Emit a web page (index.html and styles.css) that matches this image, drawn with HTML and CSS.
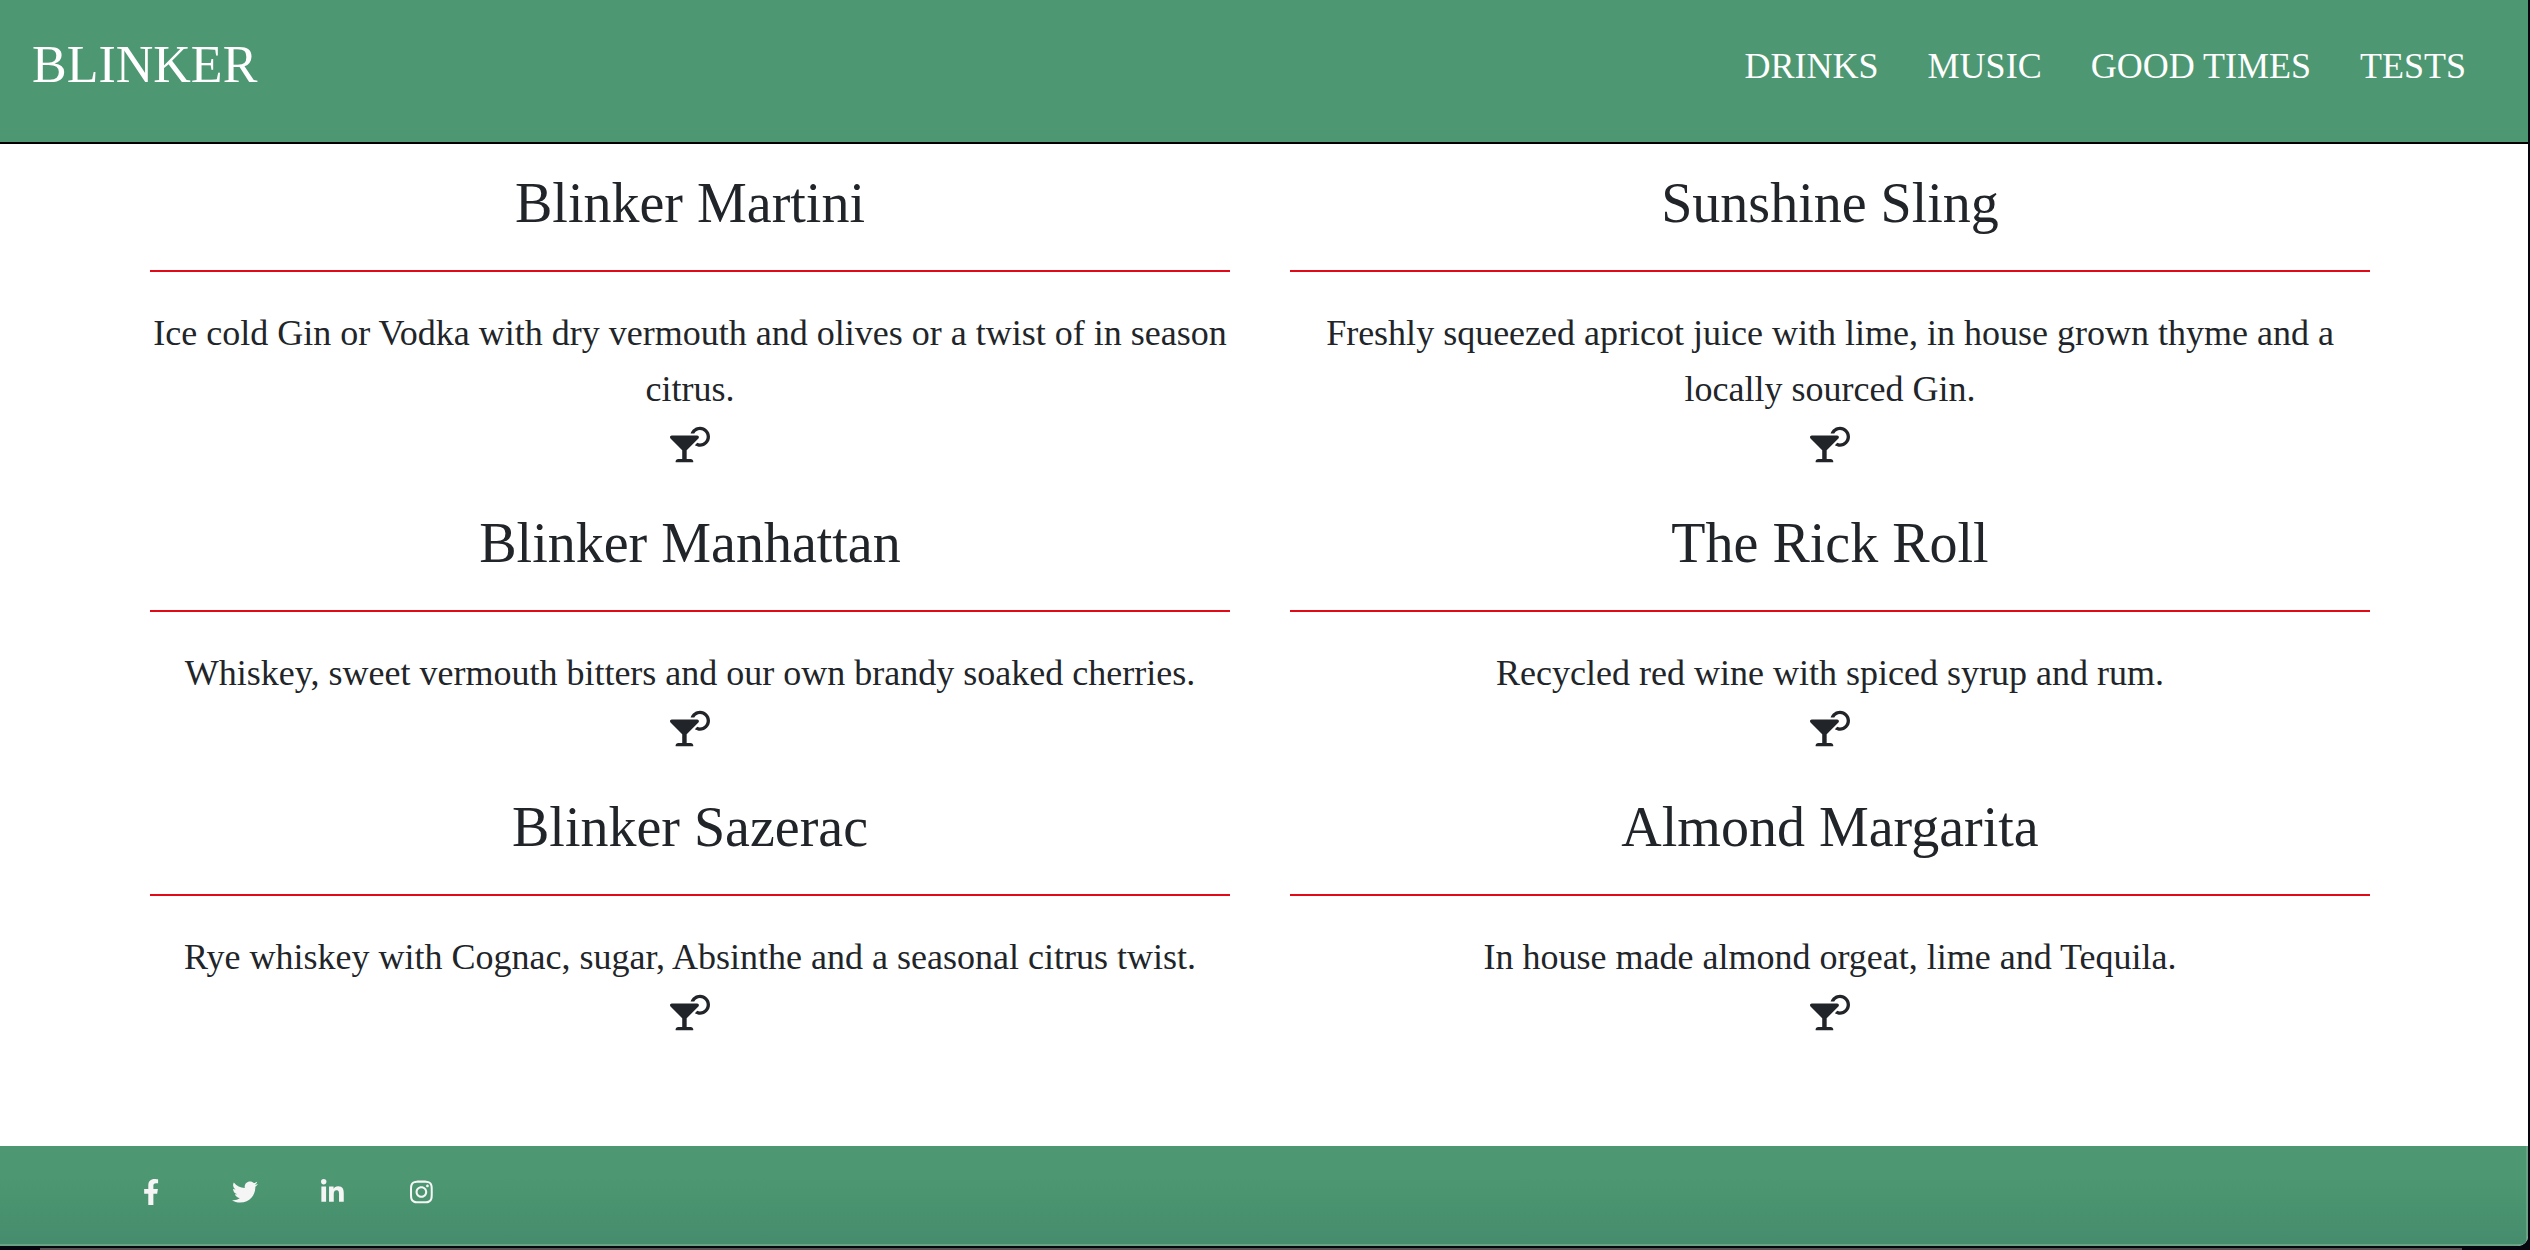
FILE: index.html
```html
<!DOCTYPE html>
<html lang="en">
<head>
<meta charset="utf-8">
<meta name="viewport" content="width=device-width, initial-scale=1">
<title>Blinker</title>
<link rel="stylesheet" href="styles.css">
</head>
<body>
<svg class="sprite" aria-hidden="true">
  <symbol id="cocktail" viewBox="0 0 576 512"><path d="M296 464h-56V338.78l168.74-168.73c15.52-15.52 4.53-42.05-17.42-42.05H24.68c-21.95 0-32.94 26.53-17.42 42.05L176 338.78V464h-56c-22.09 0-40 17.91-40 40 0 4.42 3.58 8 8 8h240c4.42 0 8-3.58 8-8 0-22.09-17.91-40-40-40zM432 0c-62.61 0-115.35 40.2-135.18 96h52.54c16.65-28.55 47.27-48 82.64-48 52.93 0 96 43.06 96 96s-43.07 96-96 96c-14.04 0-27.29-3.2-39.32-8.64l-35.26 35.26C379.23 279.92 404.59 288 432 288c79.53 0 144-64.47 144-144S511.53 0 432 0z"/></symbol>
</svg>
<div class="page">
  <header class="header">
    <a class="logo" href="#">BLINKER</a>
    <nav class="nav">
      <a href="#">DRINKS</a>
      <a href="#">MUSIC</a>
      <a href="#">GOOD TIMES</a>
      <a href="#">TESTS</a>
    </nav>
  </header>
  <main class="menu">
    <article class="drink">
      <h3>Blinker Martini</h3>
      <hr>
      <p>Ice cold Gin or Vodka with dry vermouth and olives or a twist of in season citrus.</p>
      <div class="glass"><svg><use href="#cocktail"/></svg></div>
    </article>
    <article class="drink">
      <h3>Sunshine Sling</h3>
      <hr>
      <p>Freshly squeezed apricot juice with lime, in house grown thyme and a locally sourced Gin.</p>
      <div class="glass"><svg><use href="#cocktail"/></svg></div>
    </article>
    <article class="drink">
      <h3>Blinker Manhattan</h3>
      <hr>
      <p>Whiskey, sweet vermouth bitters and our own brandy soaked cherries.</p>
      <div class="glass"><svg><use href="#cocktail"/></svg></div>
    </article>
    <article class="drink">
      <h3>The Rick Roll</h3>
      <hr>
      <p>Recycled red wine with spiced syrup and rum.</p>
      <div class="glass"><svg><use href="#cocktail"/></svg></div>
    </article>
    <article class="drink">
      <h3>Blinker Sazerac</h3>
      <hr>
      <p>Rye whiskey with Cognac, sugar, Absinthe and a seasonal citrus twist.</p>
      <div class="glass"><svg><use href="#cocktail"/></svg></div>
    </article>
    <article class="drink">
      <h3>Almond Margarita</h3>
      <hr>
      <p>In house made almond orgeat, lime and Tequila.</p>
      <div class="glass"><svg><use href="#cocktail"/></svg></div>
    </article>
  </main>
  <footer class="footer">
    <a href="#" aria-label="Facebook"><svg viewBox="0 0 320 512"><path d="M279.14 288l14.22-92.66h-88.91v-60.13c0-25.35 12.42-50.06 52.24-50.06h40.42V6.26S260.43 0 225.36 0c-73.22 0-121.08 44.38-121.08 124.72v70.62H22.89V288h81.39v224h100.17V288z"/></svg></a>
    <a href="#" aria-label="Twitter"><svg viewBox="0 0 512 512"><path d="M459.37 151.716c.325 4.548.325 9.097.325 13.645 0 138.72-105.583 298.558-298.558 298.558-59.452 0-114.68-17.219-161.137-47.106 8.447.974 16.568 1.299 25.34 1.299 49.055 0 94.213-16.568 130.274-44.832-46.132-.975-84.792-31.188-98.112-72.772 6.498.974 12.995 1.624 19.818 1.624 9.421 0 18.843-1.3 27.614-3.573-48.081-9.747-84.143-51.98-84.143-102.985v-1.299c13.969 7.797 30.214 12.67 47.431 13.319-28.264-18.843-46.781-51.005-46.781-87.391 0-19.492 5.197-37.36 14.294-52.954 51.655 63.675 129.3 105.258 216.365 109.807-1.624-7.797-2.599-15.918-2.599-24.04 0-57.828 46.782-104.934 104.934-104.934 30.213 0 57.502 12.67 76.67 33.137 23.715-4.548 46.456-13.32 66.599-25.34-7.798 24.366-24.366 44.833-46.132 57.827 21.117-2.273 41.584-8.122 60.426-16.243-14.292 20.791-32.161 39.308-52.628 54.253z"/></svg></a>
    <a href="#" aria-label="LinkedIn"><svg viewBox="0 0 448 512"><path d="M100.28 448H7.4V148.9h92.88zM53.79 108.1C24.09 108.1 0 83.5 0 53.8a53.79 53.79 0 0 1 107.58 0c0 29.7-24.1 54.3-53.79 54.3zM447.9 448h-92.68V302.4c0-34.7-.7-79.2-48.29-79.2-48.29 0-55.69 37.7-55.69 76.7V448h-92.78V148.9h89.08v40.8h1.3c12.4-23.5 42.69-48.3 87.88-48.3 94 0 111.28 61.9 111.28 142.3V448z"/></svg></a>
    <a href="#" aria-label="Instagram"><svg viewBox="0 0 448 512"><path d="M224.1 141c-63.6 0-114.9 51.3-114.9 114.9s51.3 114.9 114.9 114.9S339 319.5 339 255.9 287.7 141 224.1 141zm0 189.6c-41.1 0-74.7-33.5-74.7-74.7s33.5-74.7 74.7-74.7 74.7 33.5 74.7 74.7-33.6 74.7-74.7 74.7zm146.4-194.3c0 14.9-12 26.8-26.8 26.8-14.9 0-26.8-12-26.8-26.8s12-26.8 26.8-26.8 26.8 12 26.8 26.8zm76.1 27.2c-1.7-35.9-9.9-67.7-36.2-93.9-26.2-26.2-58-34.4-93.9-36.2-37-2.1-147.9-2.1-184.9 0-35.8 1.7-67.6 9.9-93.9 36.1s-34.4 58-36.2 93.9c-2.1 37-2.1 147.9 0 184.9 1.7 35.9 9.9 67.7 36.2 93.9s58 34.4 93.9 36.2c37 2.1 147.9 2.1 184.9 0 35.9-1.7 67.7-9.9 93.9-36.2 26.2-26.2 34.4-58 36.2-93.9 2.1-37 2.1-147.8 0-184.8zM398.8 388c-7.8 19.6-22.9 34.7-42.6 42.6-29.5 11.7-99.5 9-132.1 9s-102.7 2.6-132.1-9c-19.6-7.8-34.7-22.9-42.6-42.6-11.7-29.5-9-99.5-9-132.1s-2.6-102.7 9-132.1c7.8-19.6 22.9-34.7 42.6-42.6 29.5-11.7 99.5-9 132.1-9s102.7-2.6 132.1 9c19.6 7.8 34.7 22.9 42.6 42.6 11.7 29.5 9 99.5 9 132.1s2.7 102.7-9 132.1z"/></svg></a>
  </footer>
</div>
</body>
</html>
```
FILE: styles.css
```css
* {
  box-sizing: border-box;
}

body {
  margin: 0;
  min-height: 100vh;
  padding-right: 2px;
  display: flex;
  flex-direction: column;
  background: #05070f;
  color: #212529;
  font-family: "Liberation Serif", "Times New Roman", serif;
  font-size: 36px;
  line-height: 56px;
}

/* thin strip under the page */
body::after {
  content: "";
  height: 2px;
  margin: 2px 66px 0 40px;
  background: #555254;
}

a {
  color: #fff;
  text-decoration: none;
}

.sprite {
  display: none;
}

.page {
  flex: 1;
  display: flex;
  flex-direction: column;
  background: #fff;
  border-bottom-right-radius: 10px;
  overflow: hidden;
}

.header {
  display: flex;
  justify-content: space-between;
  align-items: flex-start;
  padding: 37px 62px 48px 32px;
  background: #4d9872;
  border-bottom: 2px solid #000;
}

.logo {
  font-size: 52px;
}

.nav {
  display: flex;
  gap: 49px;
  padding-top: 1px;
}

.menu {
  flex: 1;
  display: grid;
  grid-template-columns: 1fr 1fr;
  align-content: start;
  gap: 39px 60px;
  padding: 26px 158px 60px 150px;
  text-align: center;
}

.drink h3 {
  margin: 0 0 33px;
  font-size: 56px;
  font-weight: 400;
  line-height: 67px;
}

.drink hr {
  height: 2px;
  margin: 0 0 33px;
  border: 0;
  background: #e20a17;
}

.drink p {
  margin: 0;
}

.glass {
  display: flex;
  justify-content: center;
  align-items: center;
  height: 54px;
}

.glass svg {
  width: 40px;
  height: 37px;
  fill: #212529;
}

.footer {
  display: grid;
  grid-template-columns: repeat(4, 89px);
  padding: 33px 143px 39px;
  background: linear-gradient(#4d9872 30%, #458c6c);
  border: solid #6aa286;
  border-width: 0 2px 2px 0;
}

.footer a {
  display: flex;
}

.footer svg {
  height: 26px;
  fill: #f5f5f5;
}
```
